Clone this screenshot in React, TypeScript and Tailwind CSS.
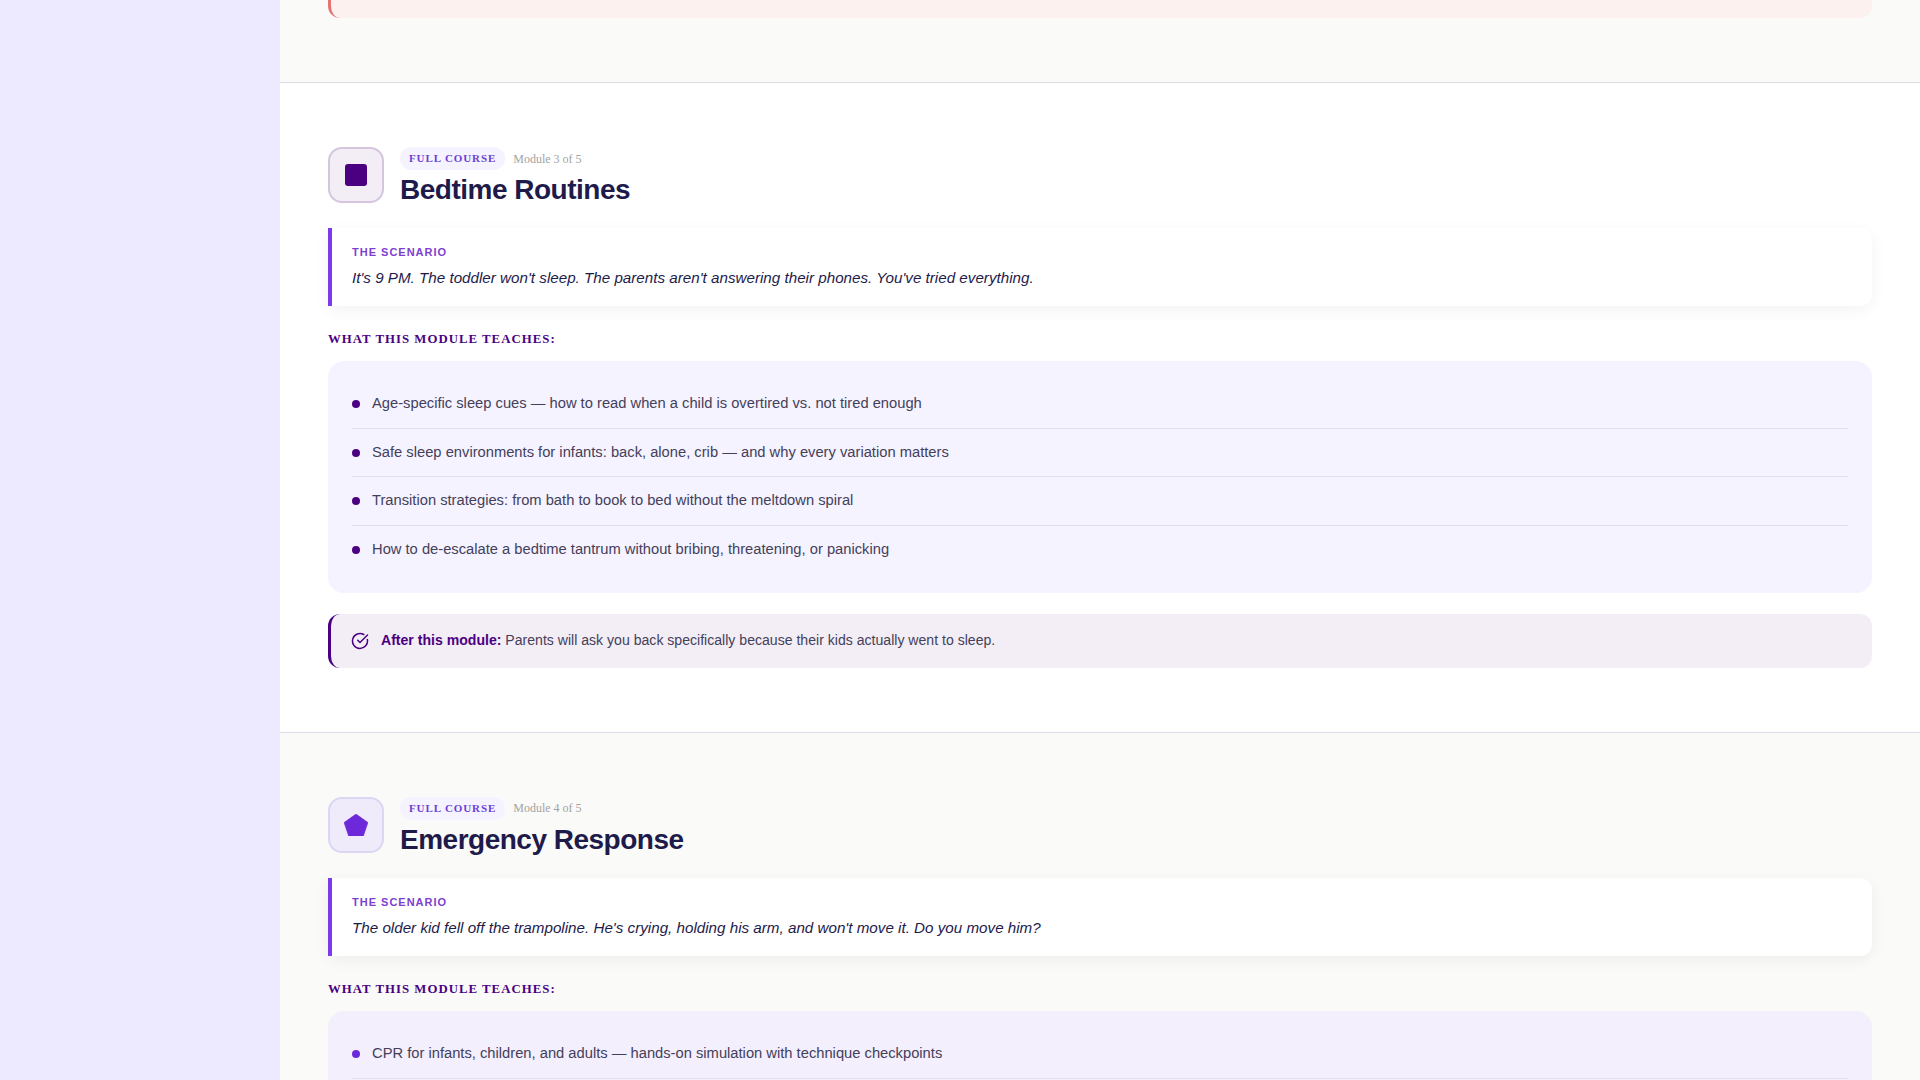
import { CircleCheckBig } from "lucide-react";

const SANS = "font-['Liberation_Sans',Arial,sans-serif]";
const SERIF = "font-['Liberation_Serif','Times_New_Roman',serif]";

function ModuleHeader({ icon, number, title, iconBox }: { icon: React.ReactNode; number: number; title: string; iconBox: string }) {
  return (
    <div className="flex items-start gap-4">
      <div className={`flex h-14 w-14 shrink-0 items-center justify-center rounded-[14px] border-2 ${iconBox}`}>{icon}</div>
      <div>
        <div className="flex items-center gap-2">
          <span className={`${SERIF} rounded-full bg-[#f5f3ff] px-[9px] py-[5px] text-[11px] leading-[13px] font-bold tracking-[0.9px] text-[#6d3fd4]`}>
            FULL COURSE
          </span>
          <span className={`${SERIF} text-xs text-[#a3a3a3]`}>Module {number} of 5</span>
        </div>
        <h2 className="mt-[2px] text-[28px] leading-9 font-bold tracking-[-0.5px] text-[#1e1b4b]">{title}</h2>
      </div>
    </div>
  );
}

function Scenario({ text }: { text: string }) {
  return (
    <div className="mt-5 h-[78px] rounded-r-xl border-l-4 border-[#7c3aed] bg-white px-5 pt-[17px] shadow-[0_4px_16px_rgba(0,0,0,0.05)]">
      <p className="text-[11px] leading-[14px] font-bold tracking-[1px] text-[#7c3fd0]">THE SCENARIO</p>
      <p className="mt-[7px] text-[15.2px] leading-6 text-[#1e1b4b] italic">{text}</p>
    </div>
  );
}

function Heading() {
  return <h3 className={`${SERIF} mt-6 text-[12.8px] leading-[18px] font-bold tracking-[1.024px] text-[#4b0082]`}>WHAT THIS MODULE TEACHES:</h3>;
}

function TopicList({ items, bg, bullet, clipped }: { items: string[]; bg: string; bullet: string; clipped?: boolean }) {
  return (
    <ul className={`mt-[13px] rounded-2xl px-6 py-[19px] ${bg}`}>
      {items.map((item, i) => (
        <li
          key={item}
          className={`flex items-center gap-3 py-3 text-[14.72px] leading-[23.7px] text-[#44405a] ${
            i < items.length - 1 || clipped ? "border-b border-[#e2deee]" : ""
          }`}
        >
          <span className={`h-2 w-2 shrink-0 rounded-full ${bullet}`} />
          {item}
        </li>
      ))}
    </ul>
  );
}

export default function App() {
  return (
    <div className={`${SANS} flex h-screen overflow-hidden bg-white`}>
      <aside className="w-[280px] shrink-0 bg-[#ede9fe]" />
      <main className="min-w-0 flex-1">
        <section className="bg-[#fafaf8] px-12 pb-16">
          <div className="h-[18px] rounded-br-xl rounded-bl-xl border-l-[3px] border-[#e57373] bg-[#fdf1ef]" />
        </section>

        <section className="border-t border-[#dddbe6] bg-white px-12 py-16">
          <ModuleHeader
            number={3}
            title="Bedtime Routines"
            iconBox="border-[#d5c6de] bg-[#f3eef6]"
            icon={<span className="h-[22px] w-[22px] rounded-[3px] bg-[#4b0082]" />}
          />
          <Scenario text="It's 9 PM. The toddler won't sleep. The parents aren't answering their phones. You've tried everything." />
          <Heading />
          <TopicList
            bg="bg-[#f5f3ff]"
            bullet="bg-[#4b0082]"
            items={[
              "Age-specific sleep cues — how to read when a child is overtired vs. not tired enough",
              "Safe sleep environments for infants: back, alone, crib — and why every variation matters",
              "Transition strategies: from bath to book to bed without the meltdown spiral",
              "How to de-escalate a bedtime tantrum without bribing, threatening, or panicking",
            ]}
          />
          <div className="mt-[21px] flex h-[54px] items-center gap-3 rounded-xl border-l-[3px] border-[#4b0082] bg-[#f3eef6] pl-5 text-[14.08px] text-[#44405a]">
            <CircleCheckBig size={18} strokeWidth={2} className="shrink-0 text-[#4b0082]" />
            <p>
              <strong className="font-bold text-[#4b0082]">After this module:</strong> Parents will ask you back specifically because their kids actually went to sleep.
            </p>
          </div>
        </section>

        <section className="border-t border-[#dddbe6] bg-[#fafaf8] px-12 pt-16">
          <ModuleHeader
            number={4}
            title="Emergency Response"
            iconBox="border-[#ddd6f3] bg-[#f0ebfb]"
            icon={
              <svg width="24" height="22" viewBox="0 0 24 22" aria-hidden="true">
                <path d="M12 0 24 8.5 19.4 22H4.6L0 8.5Z" fill="#6d28d9" stroke="#6d28d9" strokeWidth="0.5" strokeLinejoin="round" />
              </svg>
            }
          />
          <Scenario text="The older kid fell off the trampoline. He's crying, holding his arm, and won't move it. Do you move him?" />
          <Heading />
          <TopicList
            bg="bg-[#f3effd]"
            bullet="bg-[#6d28d9]"
            clipped
            items={["CPR for infants, children, and adults — hands-on simulation with technique checkpoints"]}
          />
        </section>
      </main>
    </div>
  );
}
